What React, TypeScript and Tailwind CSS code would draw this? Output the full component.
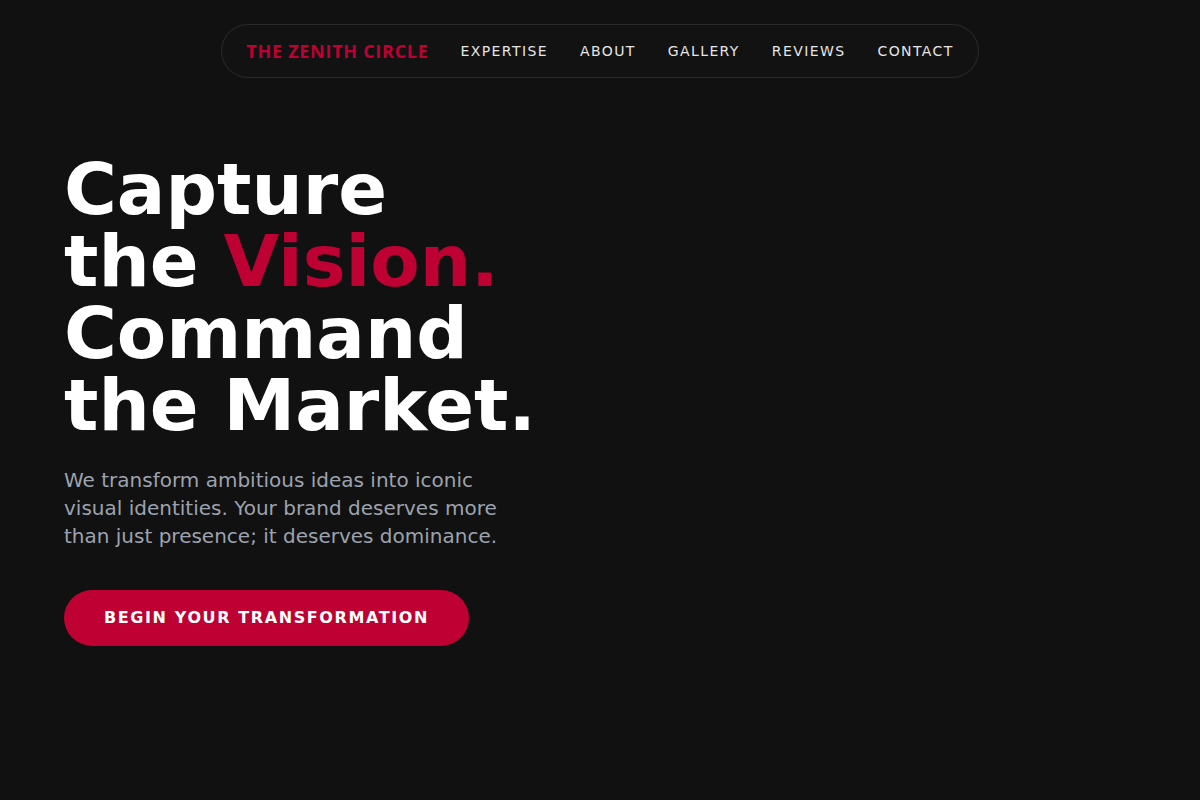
import React from 'react';

const navLinks = ['EXPERTISE', 'ABOUT', 'GALLERY', 'REVIEWS', 'CONTACT'];

const App = () => {
  return (
    <div className="min-h-screen bg-[#111111] font-['DejaVu_Sans',sans-serif] text-white">
      <header className="flex justify-center pt-6">
        <nav className="flex items-center gap-8 rounded-full border border-white/10 bg-[#121212] px-6 py-3">
          <a href="#" className="font-['Open_Sans',sans-serif] text-lg leading-7 font-bold tracking-[0.04em] text-[#be0032]">
            THE ZENITH CIRCLE
          </a>
          {navLinks.map((link) => (
            <a key={link} href="#" className="text-sm tracking-widest text-[#e5e5e5]">
              {link}
            </a>
          ))}
        </nav>
      </header>

      <main className="px-16 pt-[75px]">
        <h1 className="text-7xl leading-none font-bold">
          Capture
          <br />
          the <span className="text-[#be0032]">Vision.</span>
          <br />
          Command
          <br />
          the Market.
        </h1>
        <p className="mt-[25px] max-w-md text-xl leading-7 text-[#9ca3af]">
          We transform ambitious ideas into iconic visual identities. Your brand deserves more than just presence; it
          deserves dominance.
        </p>
        <button className="mt-10 rounded-full bg-[#be0032] px-10 py-4 text-base leading-6 font-bold tracking-widest text-white">
          BEGIN YOUR TRANSFORMATION
        </button>
      </main>
    </div>
  );
};

export default App;
